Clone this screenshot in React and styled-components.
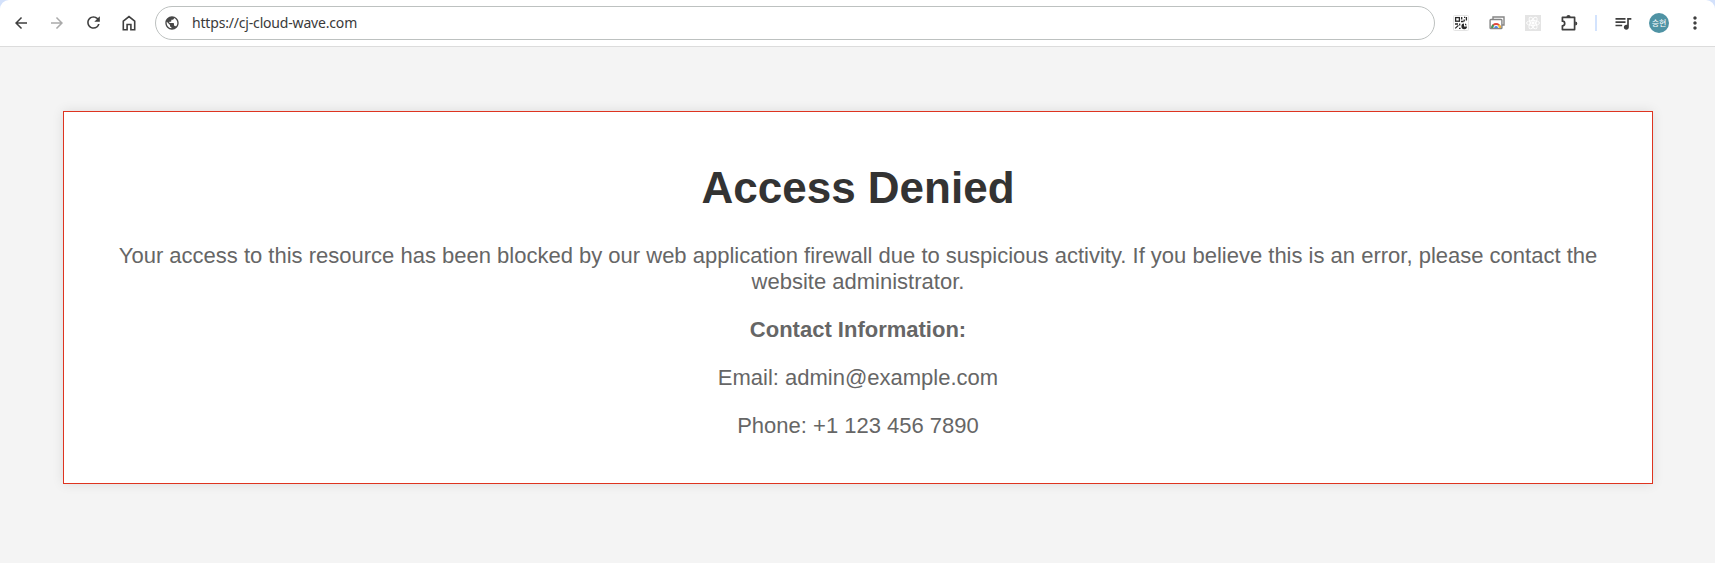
import React from 'react';
import styled, { createGlobalStyle } from 'styled-components';
import { MdPublic, MdQueueMusic, MdArrowBack, MdArrowForward, MdRefresh, MdMoreVert } from 'react-icons/md';

const GlobalStyle = createGlobalStyle`
  *, *::before, *::after { box-sizing: border-box; }
  body { margin: 0; background: #d3e1fb; font-family: Arial, "Liberation Sans", sans-serif; }
`;

const Window = styled.div`
  display: flex;
  flex-direction: column;
  height: 563px;
  overflow: hidden;
`;

const Toolbar = styled.header`
  display: flex;
  align-items: center;
  flex: none;
  height: 47px;
  padding: 0 11px 1px 12px;
  background: #fff;
  border-bottom: 1px solid #dcdcdc;
  border-radius: 9px 9px 0 0;
`;

const NavGroup = styled.nav`
  display: flex;
  align-items: center;
  gap: 18px;
  margin-right: 17px;
`;

const IconButton = styled.button`
  display: flex;
  align-items: center;
  justify-content: center;
  width: 18px;
  height: 18px;
  padding: 0;
  border: 0;
  background: none;
  color: ${({ $muted }) => ($muted ? '#aaa' : '#3f3f3f')};
  svg { display: block; flex: none; }
`;

const AddressBar = styled.div`
  display: flex;
  align-items: center;
  flex: 1;
  height: 34px;
  padding-left: 8px;
  border: 1px solid #bdc1c0;
  border-radius: 17px;
  color: #474747;
  svg { flex: none; }
`;

const Url = styled.span`
  margin-left: 12px;
  font: 14px/20px "Noto Sans", sans-serif;
  letter-spacing: -0.18px;
  color: #3a3a3a;
`;

const Extensions = styled.div`
  display: flex;
  align-items: center;
  gap: 18px;
  margin: 0 1px 0 17px;
`;

const Divider = styled.span`
  width: 2px;
  height: 16px;
  margin: 0 17px 0 16px;
  background: #d3e3fd;
`;

const Profile = styled.div`
  display: flex;
  align-items: center;
  justify-content: center;
  width: 20px;
  height: 20px;
  margin: 0 17px 0 17px;
  border-radius: 50%;
  background: #4f93a4;
  color: #fff;
  font: 8px/20px "Noto Sans CJK KR", sans-serif;
  white-space: nowrap;
`;

const Page = styled.main`
  flex: 1;
  padding: 64px 62px 0 63px;
  background: #f4f4f4;
`;

const Notice = styled.section`
  height: 373px;
  padding: 51px 44px 0;
  border: 1px solid #de3420;
  background: #fff;
  box-shadow: 0 0 11px rgba(0, 0, 0, 0.1);
  text-align: center;
`;

const Title = styled.h1`
  margin: 0 0 30px;
  font-size: 44px;
  line-height: 50px;
  color: #333;
`;

const Paragraph = styled.p`
  margin: 0 0 22px;
  font-size: 22px;
  line-height: 26px;
  color: #666;
`;

const HomeIcon = () => (
  <svg width="18" height="18" viewBox="0 0 18 18" fill="none" stroke="currentColor" strokeWidth="1.6">
    <path d="M3.3 15.7V7.1L9 2.6l5.7 4.5v8.6h-3.8v-5.2H7.1v5.2z" />
  </svg>
);

const QrIcon = () => (
  <svg width="16" height="16" viewBox="0 0 16 16">
    <rect x=".5" y=".5" width="15" height="15" rx="1" fill="#fff" stroke="#e4e4e4" />
    <g fill="none" stroke="#292929" strokeWidth="1.3">
      <rect x="2.6" y="2.6" width="3.8" height="3.6" />
      <path d="M8.7 2v2.4M8 6.5h2.5M11 2.4h1.2M13.4 2v3.5M11.2 4.5v2M2 9h3M6.7 8.5v2M2.2 13.4l3.2-3M6 13.4h1.6" />
    </g>
    <path d="M11 8.6v2.8h3A2.8 2.8 0 1 1 11 8.6zM12 8.2l2 2h-2z" fill="#292929" />
  </svg>
);

const RainbowWindowIcon = () => (
  <svg width="16" height="16" viewBox="0 0 16 16" fill="none">
    <path d="M4 4V2h11v8h-2" stroke="#858585" strokeWidth="1.4" />
    <rect x="1.1" y="4.5" width="11.8" height="9" rx=".8" fill="#fff" stroke="#858585" strokeWidth="1.4" />
    <path d="M3.1 13a4 4 0 0 1 8 0" stroke="#df493d" strokeWidth="2" />
    <path d="M3.2 13a4 4 0 0 1 1.2-3" stroke="#3b9c59" strokeWidth="2" />
    <path d="M9.8 10a4 4 0 0 1 1.2 3" stroke="#f3c332" strokeWidth="2" />
    <path d="M5.2 13a1.9 1.9 0 0 1 3.8 0z" fill="#4285e8" />
  </svg>
);

const AtomIcon = () => (
  <svg width="16" height="16" viewBox="0 0 16 16" fill="none" stroke="#fff" strokeWidth=".9">
    <path d="M0 0h16v16H0z" fill="#e4e4e4" stroke="none" />
    <ellipse cx="8" cy="8" rx="6.5" ry="2.5" />
    <ellipse cx="8" cy="8" rx="6.5" ry="2.5" transform="rotate(60 8 8)" />
    <ellipse cx="8" cy="8" rx="6.5" ry="2.5" transform="rotate(120 8 8)" />
    <circle cx="8" cy="8" r="1.2" fill="#fff" />
  </svg>
);

const PuzzleIcon = () => (
  <svg width="18" height="18" viewBox="0 0 18 18">
    <path d="M2.4 3.4h12.2v12.2H2.4v-3.8a2.3 2.3 0 0 0 0-4.6z" fill="none" stroke="currentColor" strokeWidth="1.7" strokeLinejoin="round" />
    <path d="M6.4 3a2.1 2.1 0 0 1 4.2 0zM15.2 7.4a2.1 2.1 0 0 1 0 4.2z" fill="currentColor" />
  </svg>
);

export default function App() {
  return (
    <Window>
      <GlobalStyle />
      <Toolbar>
        <NavGroup>
          <IconButton aria-label="Back"><MdArrowBack size={18} /></IconButton>
          <IconButton aria-label="Forward" $muted><MdArrowForward size={18} /></IconButton>
          <IconButton aria-label="Reload"><MdRefresh size={19} /></IconButton>
          <IconButton aria-label="Home"><HomeIcon /></IconButton>
        </NavGroup>
        <AddressBar>
          <MdPublic size={16} />
          <Url>https://cj-cloud-wave.com</Url>
        </AddressBar>
        <Extensions>
          <IconButton aria-label="QR code"><QrIcon /></IconButton>
          <IconButton aria-label="Web store"><RainbowWindowIcon /></IconButton>
          <IconButton aria-label="React tools"><AtomIcon /></IconButton>
          <IconButton aria-label="Extensions"><PuzzleIcon /></IconButton>
        </Extensions>
        <Divider />
        <IconButton aria-label="Media"><MdQueueMusic size={20} /></IconButton>
        <Profile>승현</Profile>
        <IconButton aria-label="Menu"><MdMoreVert size={20} /></IconButton>
      </Toolbar>
      <Page>
        <Notice>
          <Title>Access Denied</Title>
          <Paragraph>
            Your access to this resource has been blocked by our web application firewall due to suspicious activity. If you believe this is an error, please contact the website administrator.
          </Paragraph>
          <Paragraph><strong>Contact Information:</strong></Paragraph>
          <Paragraph>Email: admin@example.com</Paragraph>
          <Paragraph>Phone: +1 123 456 7890</Paragraph>
        </Notice>
      </Page>
    </Window>
  );
}
